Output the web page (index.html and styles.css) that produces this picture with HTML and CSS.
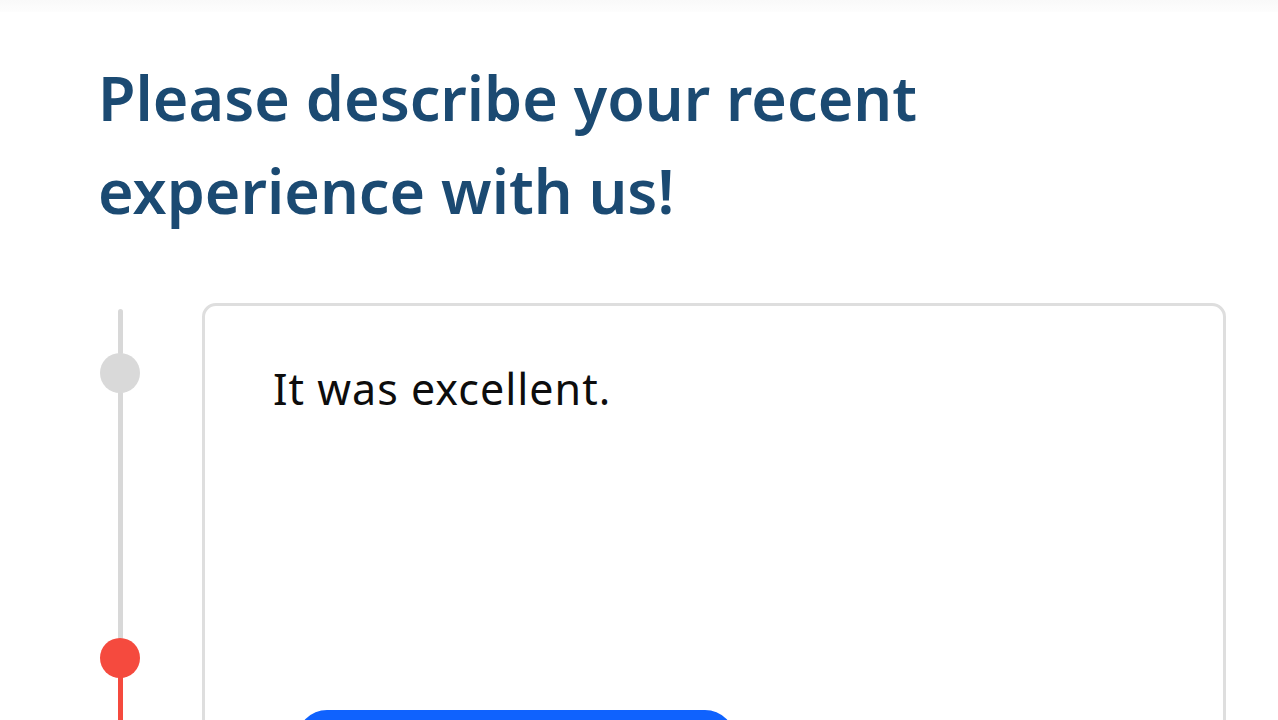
FILE: index.html
```html
<!DOCTYPE html>
<html lang="en">
<head>
<meta charset="utf-8">
<title>Feedback</title>
<link rel="stylesheet" href="styles.css">
</head>
<body>
<div class="topbar"></div>
<main class="page">
  <h1 class="title">Please describe your recent experience with us!</h1>
  <section class="step">
    <div class="rail">
      <div class="rail-line rail-top"></div>
      <div class="dot dot-gray"></div>
      <div class="rail-line rail-mid"></div>
      <div class="dot dot-red"></div>
      <div class="rail-line rail-red"></div>
    </div>
    <div class="card">
      <p class="answer">It was excellent.</p>
      <div class="card-space"></div>
      <div class="submit" role="button" aria-label="Submit"></div>
    </div>
  </section>
</main>
</body>
</html>
```
FILE: styles.css
```css
* { box-sizing: border-box; }
html, body { margin: 0; padding: 0; background: #ffffff; overflow: hidden; height: 720px; }
.topbar {
  height: 12px;
  background: linear-gradient(#f9f9f9, #fdfdfd);
}
.page {
  padding: 0 0 0 98px;
}
.title {
  margin: 39px 0 0 0;
  width: 860px;
  font-family: "Noto Sans", sans-serif;
  font-weight: 600;
  font-size: 61px;
  line-height: 93px;
  color: #1b4a72;
  letter-spacing: 0;
}
.step {
  display: flex;
  margin-top: 66px;
  gap: 60px;
}
.rail {
  width: 44px;
  display: flex;
  flex-direction: column;
  align-items: center;
}
.rail-line { width: 5px; border-radius: 3px; background: #d8d8d8; }
.rail-top { height: 46px; margin-top: 6px; }
.rail-mid { height: 249px; }
.rail-red { height: 60px; background: #f54a3e; border-radius: 0; }
.dot { width: 40px; height: 40px; border-radius: 50%; margin: -2px 0; position: relative; z-index: 1; }
.dot-gray { background: #d9d9d9; }
.dot-red { background: #f54a3e; }
.card {
  width: 1024px;
  height: 520px;
  border: 3px solid #dedede;
  border-radius: 14px;
  padding: 53px 0 0 68px;
}
.answer {
  margin: 0;
  font-family: "Noto Sans", sans-serif;
  font-size: 43px;
  letter-spacing: 1px;
  line-height: 60px;
  color: #0d0d0d;
}
.card-space { height: 291px; }
.submit {
  width: 438px;
  height: 80px;
  margin-left: 24px;
  border-radius: 30px;
  background: #0f62fe;
}
```
